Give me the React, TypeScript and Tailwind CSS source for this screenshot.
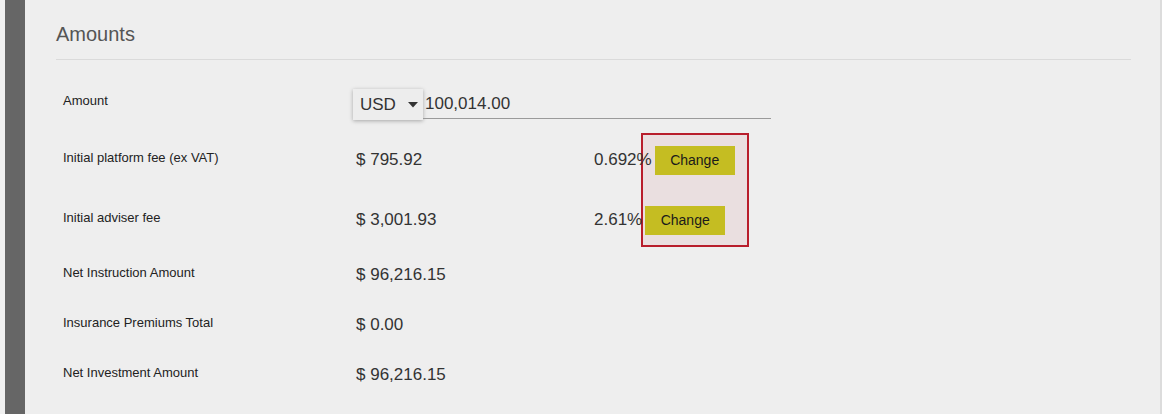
import React from 'react'

const font = { fontFamily: '"Liberation Sans", Arial, sans-serif' }

function Row({ label, value, extra, first }: { label: string; value: string; extra?: React.ReactNode; first?: string }) {
  return (
    <div className={`flex h-[30px] items-center ${first ?? ''}`}>
      <div className="w-[297px] pb-[4px] pl-[7px] text-[13px] text-[#222]">{label}</div>
      <div className="ml-[3px] w-[238px] text-[17px] text-[#333]">{value}</div>
      {extra}
    </div>
  )
}

function Fee({ pct }: { pct: string }) {
  return (
    <div className="relative z-10 flex items-center">
      <span className="text-[17px] text-[#333]">{pct}</span>
      <button className="ml-[3px] h-[29px] w-[80px] bg-[#c5bd22] text-[14px] text-[#1a1a1a]">
        Change
      </button>
    </div>
  )
}

export default function App() {
  return (
    <div className="flex h-[414px] w-[1166px] bg-[#efefef]" style={font}>
      <div className="w-[5px] bg-[#f0f0f0]" />
      <div className="w-[20px] bg-[#666666]" />
      <div className="relative flex-1 border-r-2 border-[#dcdcdc] bg-[#eeeeee] pl-[31px] pr-[29px] pt-[22px]">
        <h2 className="h-[24px] text-[20px] leading-[24px] text-[#555]">Amounts</h2>
        <div className="mt-[13px] h-px bg-[#dadada]" />

        <div className="mt-[29px] flex h-[31px] items-center">
          <div className="w-[297px] pb-[7px] pl-[7px] text-[13px] text-[#222]">Amount</div>
          <div className="flex h-[31px] w-[70px] items-center justify-between bg-[#ededed] pl-[7px] pr-[5px] shadow-[0_1px_4px_rgba(0,0,0,0.3)]">
            <span className="text-[17px] text-[#333]">USD</span>
            <svg width="10" height="6" viewBox="0 0 10 6">
              <path d="M0 0h10L5 5.5z" fill="#333" />
            </svg>
          </div>
          <div className="flex h-[28px] w-[348px] items-center border-b border-[#9a9a9a] pl-[2px] text-[17px] text-[#333]">
            100,014.00
          </div>
        </div>

        <Row first="mt-[25px]" label="Initial platform fee (ex VAT)" value="$ 795.92" extra={<Fee pct="0.692%" />} />
        <Row first="mt-[30px]" label="Initial adviser fee" value="$ 3,001.93" extra={<Fee pct="2.61%" />} />
        <Row first="mt-[25px]" label="Net Instruction Amount" value="$ 96,216.15" />
        <Row first="mt-[20px]" label="Insurance Premiums Total" value="$ 0.00" />
        <Row first="mt-[20px]" label="Net Investment Amount" value="$ 96,216.15" />

        <div className="absolute left-[616px] top-[133px] h-[114px] w-[108px] border-2 border-[#b81d2b] bg-[#eadfe0]" />
      </div>
      <div className="w-[4px] bg-white" />
    </div>
  )
}
